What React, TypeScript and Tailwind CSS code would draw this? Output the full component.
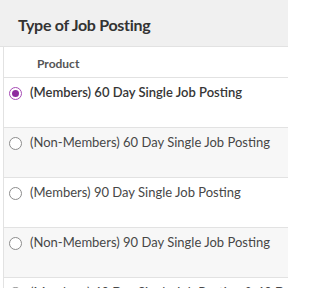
import type { ReactNode } from 'react';

const rows = [
  { label: '(Members) 60 Day Single Job Posting', selected: true },
  { label: '(Non-Members) 60 Day Single Job Posting', selected: false },
  { label: '(Members) 90 Day Single Job Posting', selected: false },
  { label: '(Non-Members) 90 Day Single Job Posting', selected: false },
  { label: '(Members) 60 Day Single Job Posting & 60 Day Featured', selected: false },
];

function Radio({ checked }: { checked: boolean }) {
  if (checked) {
    return (
      <span className="flex h-[13px] w-[13px] shrink-0 items-center justify-center rounded-full border-[1.5px] border-[#a64bb5] bg-white">
        <span className="h-[7px] w-[7px] rounded-full bg-[#8e2b9e]" />
      </span>
    );
  }
  return <span className="h-[13px] w-[13px] shrink-0 rounded-full border border-[#8c8c8c] bg-white" />;
}

function Row({ children, striped }: { children: ReactNode; striped: boolean }) {
  return (
    <div
      className={`flex h-[50px] shrink-0 items-start overflow-hidden border-b border-[#e2e2e2] pl-[5px] pt-[5px] ${
        striped ? 'bg-[#f7f7f7]' : 'bg-white'
      }`}
    >
      {children}
    </div>
  );
}

export default function App() {
  return (
    <div className="flex h-[288px] w-[288px] flex-col overflow-hidden bg-white font-['Lato',sans-serif]">
      {/* Section header */}
      <header className="flex h-[47px] shrink-0 items-center border-b border-[#e2e2e2] bg-[#f0f0f0] px-[18px] pt-[4px]">
        <h2 className="text-[16px] font-bold tracking-[-0.3px] text-[#333]">Type of Job Posting</h2>
      </header>

      {/* Table */}
      <div className="ml-[3px] flex min-h-0 flex-1 flex-col overflow-hidden border-l border-[#e2e2e2]">
        <div className="flex h-[31px] shrink-0 items-center border-b border-[#e2e2e2] bg-white pl-[33px] pt-[3px]">
          <span className="text-[12px] font-bold text-[#555]">Product</span>
        </div>
        {rows.map((row, i) => (
          <Row key={row.label} striped={i % 2 === 1}>
            <div className="flex h-[20px] items-center gap-[8px] whitespace-nowrap">
              <Radio checked={row.selected} />
              <span className={`text-[13px] ${row.selected ? 'font-semibold text-[#363636]' : 'text-[#474747]'}`}>
                {row.label}
              </span>
            </div>
          </Row>
        ))}
      </div>
    </div>
  );
}
